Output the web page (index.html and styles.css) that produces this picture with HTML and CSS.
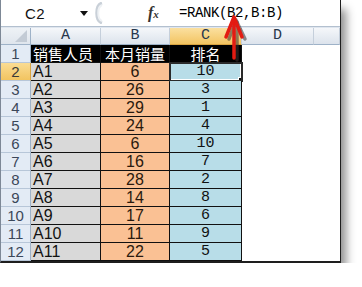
FILE: index.html
```html
<!DOCTYPE html>
<html lang="zh-CN">

<head>
    <meta charset="UTF-8">
    <meta name="viewport" content="width=device-width, initial-scale=1.0">
    <title>RANK 排名</title>
    <link rel="stylesheet" href="styles.css">
</head>

<body>
    <div class="sheet-window">
        <div class="formula-bar">
            <div class="name-box">
                <span class="cell-ref">C2</span>
                <span class="caret"></span>
            </div>
            <svg class="splitter" width="12" height="22" viewBox="0 0 12 22">
                <path d="M10 1 C3 3 3 19 10 21" fill="none" stroke="#c9d0d8" stroke-width="3" />
                <path d="M10 3 C5 5 5 17 10 19" fill="none" stroke="#eef1f4" stroke-width="2" />
            </svg>
            <div class="fx">f<span>x</span></div>
            <div class="formula">=RANK(B2,B:B)</div>
        </div>

        <table class="grid">
            <colgroup>
                <col class="col-head">
                <col class="col-a">
                <col class="col-b">
                <col class="col-c">
                <col class="col-d">
                <col>
            </colgroup>
            <thead>
                <tr>
                    <th class="corner"></th>
                    <th>A</th>
                    <th>B</th>
                    <th class="active">C</th>
                    <th>D</th>
                    <th></th>
                </tr>
            </thead>
            <tbody id="rows">
                <tr class="title-row">
                    <th class="row-num">1</th>
                    <td class="name">销售人员</td>
                    <td class="sales">本月销量</td>
                    <td class="rank">排名</td>
                    <td class="blank"></td>
                    <td class="blank"></td>
                </tr>
            </tbody>
        </table>

        <svg class="arrow" width="34" height="54" viewBox="0 0 34 54">
            <g fill="none" stroke="#3a2f2f" stroke-opacity="0.55" stroke-width="3.5" stroke-linecap="round" stroke-linejoin="round">
                <path d="M19 10 L19 48" />
                <path d="M11 27 L18 8 L27 27" />
            </g>
            <g fill="none" stroke="#e31b12" stroke-width="3.5" stroke-linecap="round" stroke-linejoin="round">
                <path d="M16 8 L16 46" />
                <path d="M8 25 L16 5 L24 25" />
            </g>
        </svg>
    </div>

    <script>
        const data = [
            ["A1", 6, 10], ["A2", 26, 3], ["A3", 29, 1], ["A4", 24, 4],
            ["A5", 6, 10], ["A6", 16, 7], ["A7", 28, 2], ["A8", 14, 8],
            ["A9", 17, 6], ["A10", 11, 9], ["A11", 22, 5]
        ];
        const rows = document.getElementById("rows");
        data.forEach((item, i) => {
            const row = document.createElement("tr");
            const active = i === 0 ? " active" : "";
            const selected = i === 0 ? " selected" : "";
            row.innerHTML = `<th class="row-num${active}">${i + 2}</th>` +
                `<td class="name">${item[0]}</td>` +
                `<td class="sales">${item[1]}</td>` +
                `<td class="rank${selected}">${item[2]}</td>` +
                `<td class="blank"></td><td class="blank"></td>`;
            rows.appendChild(row);
        });
    </script>
</body>

</html>
```

FILE: styles.css
```css
body {
    margin: 0;
    background-color: #fff;
    font-family: "Liberation Sans", Arial, sans-serif;
}

.sheet-window {
    position: relative;
    width: 339px;
    border-left: 1px solid #7d8896;
    border-right: 1px solid #1e1e1e;
    border-bottom: 2px solid #1e1e1e;
    background-color: #dfe6ef;
    box-shadow: 6px 8px 9px -1px rgba(0, 0, 0, 0.45);
}

/* formula bar */
.formula-bar {
    display: flex;
    align-items: center;
    height: 26px;
    background-color: #fff;
    border-bottom: 1px solid #b3c0cf;
    margin-bottom: 1px;
}

.name-box {
    display: flex;
    align-items: center;
    width: 91px;
    height: 100%;
}

.cell-ref {
    margin-left: 24px;
    font-size: 15px;
    color: #111;
    letter-spacing: 0.5px;
}

.caret {
    margin-left: 35px;
    width: 0;
    height: 0;
    border-left: 4px solid transparent;
    border-right: 4px solid transparent;
    border-top: 5px solid #111;
}

.splitter {
    display: block;
}

.fx {
    margin-left: 44px;
    width: 24px;
    font-family: "Liberation Serif", serif;
    font-style: italic;
    font-weight: bold;
    font-size: 16px;
    color: #333;
}

.fx span {
    font-size: 11px;
}

.formula {
    margin-left: 7px;
    font-family: "Liberation Mono", monospace;
    font-size: 14px;
    letter-spacing: -0.4px;
    color: #000;
}

/* grid */
.grid {
    table-layout: fixed;
    width: 339px;
    border-spacing: 0;
    background-color: #fff;
}

.col-head { width: 30px; }
.col-a { width: 70px; }
.col-b { width: 69px; }
.col-c { width: 72px; }
.col-d { width: 72px; }

.grid th,
.grid td {
    box-sizing: border-box;
    padding: 0;
    overflow: hidden;
    white-space: nowrap;
}

.grid thead th {
    height: 17px;
    background: linear-gradient(#f5f7fa, #dce3ec);
    border-right: 1px solid #c5cfdb;
    border-bottom: 1px solid #9eb2c8;
    font-family: "Liberation Mono", monospace;
    font-weight: normal;
    font-size: 15px;
    line-height: 16px;
    color: #27364c;
}

.grid thead th.active {
    background: linear-gradient(#fbe0a0, #f3c462);
    border-bottom-color: #d9a441;
}

.grid thead th.corner {
    position: relative;
    background: linear-gradient(#eef2f6, #dfe5ed);
    border-right-color: #9eb2c8;
}

.grid thead th.corner::after {
    content: "";
    position: absolute;
    right: 3px;
    bottom: 2px;
    border-left: 12px solid transparent;
    border-bottom: 12px solid #c3cbd5;
}

.grid tbody tr {
    height: 18px;
}

.row-num {
    height: 18px;
    background-color: #e3ebf5;
    border-right: 1px solid #9eb2c8;
    border-bottom: 1px solid #b7c6d8;
    font-weight: normal;
    font-size: 15px;
    color: #3b4759;
    text-align: center;
}

.row-num.active {
    background: linear-gradient(#fadc93, #f2c460);
    border-right-color: #d9a441;
    color: #3b3a38;
}

.grid td {
    height: 18px;
    font-size: 16px;
    line-height: 17px;
    color: #111;
    border-right: 1px solid #111;
    border-bottom: 1px solid #111;
}

.name {
    background-color: #d9d9d9;
    padding-left: 2px !important;
}

.sales {
    background-color: #fac194;
    text-align: center;
    color: #2a1a0e !important;
}

.rank {
    position: relative;
    background-color: #b8dde8;
    text-align: center;
    font-family: "Liberation Mono", monospace;
    font-size: 15px !important;
}

.grid td.blank {
    border: none;
    background-color: #fff;
}

.grid .title-row td {
    overflow: visible;
    background-color: #000;
    color: #fff !important;
    font-family: "Noto Sans CJK SC", sans-serif;
    font-size: 15px;
    line-height: 17px;
}

.grid .title-row td.rank {
    font-family: "Noto Sans CJK SC", sans-serif;
    font-size: 15px !important;
}

.grid .title-row td.blank {
    background-color: #fff;
}

.rank.selected {
    box-shadow: inset 0 0 0 1px #fff;
    outline: 2px solid #2a2a2a;
    outline-offset: -1px;
}

.rank.selected::after {
    content: "";
    position: absolute;
    right: -3px;
    bottom: -3px;
    width: 4px;
    height: 4px;
    background-color: #111;
    border: 1px solid #fff;
}

/* red arrow over the sheet */
.arrow {
    position: absolute;
    left: 217px;
    top: 12px;
}
```
